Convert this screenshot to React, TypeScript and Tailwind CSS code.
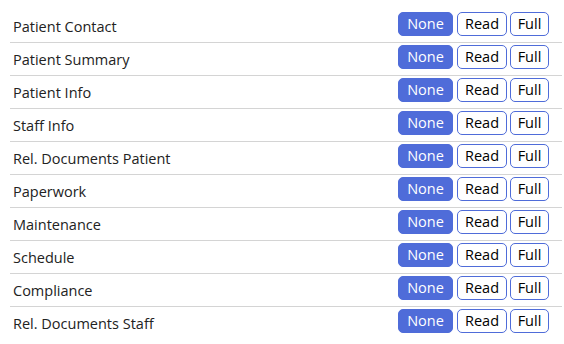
const sections = [
  "Patient Contact",
  "Patient Summary",
  "Patient Info",
  "Staff Info",
  "Rel. Documents Patient",
  "Paperwork",
  "Maintenance",
  "Schedule",
  "Compliance",
  "Rel. Documents Staff",
];

function AccessRow({ label }: { label: string }) {
  return (
    <div className="flex h-[33px] items-start justify-between border-b border-[#d4d4d4] last:border-b-0">
      <span className="pl-[3px] pt-[7px] text-[14.5px] leading-[20px] text-[#222]">{label}</span>
      <div className="flex pr-[13px] pt-[2px]">
        <button className="h-[24px] w-[55px] rounded-[5px] border border-[#4f6cd9] bg-[#4f6cd9] text-[14.5px] leading-[20px] text-white">
          None
        </button>
        <button className="ml-[4px] h-[24px] w-[50px] rounded-[5px] border border-[#4f6cd9] bg-white text-[14.5px] leading-[20px] text-black">
          Read
        </button>
        <button className="ml-[3px] h-[24px] w-[39px] rounded-[5px] border border-[#4f6cd9] bg-white text-[14.5px] leading-[20px] text-black">
          Full
        </button>
      </div>
    </div>
  );
}

export default function App() {
  return (
    <div className="min-h-screen bg-white pl-[10px] pr-[2px] pt-[10px] font-['Open_Sans',sans-serif]">
      {sections.map((s) => (
        <AccessRow key={s} label={s} />
      ))}
    </div>
  );
}
